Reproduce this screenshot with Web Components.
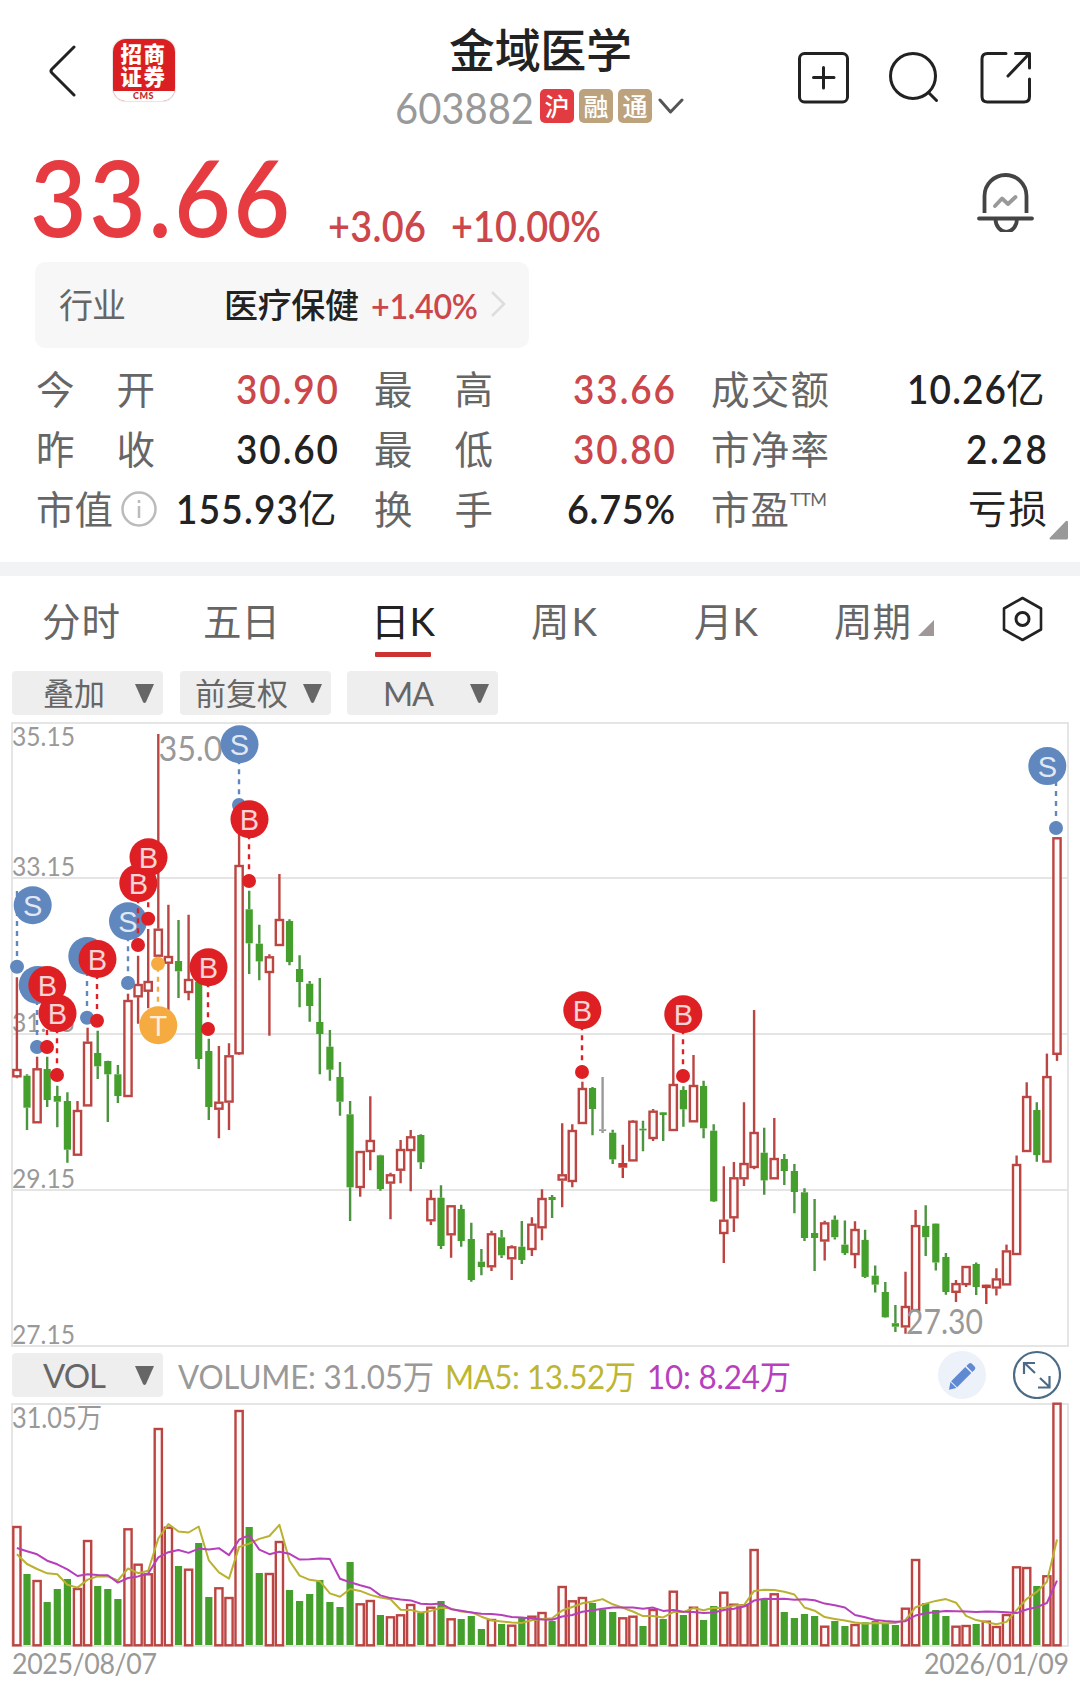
<!DOCTYPE html>
<html lang="zh-CN">
<head>
<meta charset="utf-8">
<title>金域医学 603882</title>
<style>
  html, body { margin: 0; padding: 0; background: #fff; }
  body { width: 1080px; height: 1692px; overflow: hidden; font-family: Lato, "Noto Sans CJK SC", sans-serif; color: #222; }
</style>
</head>
<body>
<stock-page></stock-page>

<script>
const define = (name, html, setup) => {
  const tpl = document.createElement('template');
  tpl.innerHTML = html;
  customElements.define(name, class extends HTMLElement {
    connectedCallback() {
      if (this.shadowRoot) return;
      this.attachShadow({ mode: 'open' }).append(tpl.content.cloneNode(true));
      if (setup) setup(this, this.shadowRoot);
    }
  });
};

/* Text tracked to a fixed width: <q-text w="98" sx=".92">30.90</q-text>; sx condenses the glyphs first. */
define('q-text', `
  <style>
    :host { display: block; flex: none; white-space: nowrap; line-height: 1; }
    span { display: inline-block; transform-origin: 0 50%; }
  </style>
  <span><slot></slot></span>`, (host, root) => {
  const w = +host.getAttribute('w');
  const sx = +(host.getAttribute('sx') || 1);
  if (!w) return;
  const span = root.querySelector('span');
  const n = [...host.textContent.trim()].length;
  const natural = span.getBoundingClientRect().width;
  host.style.width = w + 'px';
  if (n > 1) span.style.letterSpacing = (w / sx - natural) / (n - 1) + 'px';
  if (sx !== 1) span.style.transform = `scaleX(${sx})`;
});

define('market-badge', `
  <style>
    :host { display: flex; width: 34px; height: 34px; border-radius: 5px; background: var(--badge, #bda27e);
      color: #fff; font-size: 25px; font-weight: 500; line-height: 32px; align-items: center; justify-content: center; }
  </style><slot></slot>`);

define('broker-logo', `
  <style>
    :host { display: flex; flex-direction: column; width: 62px; height: 62px; border-radius: 13px; overflow: hidden;
      background: #d91f22; box-shadow: 0 0 1px 1px #e8e4e4; color: #fff; font-weight: 700; text-align: center; }
    b { display: block; font-size: 21.5px; line-height: 23px; letter-spacing: 1.5px; }
    .top { padding-top: 4px; }
    i { font-style: normal; display: block; margin-top: 2px; height: 14px; background: #fff; color: #c02a2a; font-size: 9px; font-weight: 900; line-height: 10px; letter-spacing: .5px; }
  </style>
  <b class="top">招商</b><b>证券</b><i>CMS</i>`);

define('stock-header', `
  <style>
    :host { display: flex; height: 140px; align-items: flex-start; }
    svg { display: block; flex: none; fill: none; stroke: #222; stroke-width: 3; stroke-linecap: round; stroke-linejoin: round; }
    .back { margin: 45px 0 0 49px; }
    broker-logo { margin: 39px 0 0 35.500px; }
    .mid { margin-left: 220.500px; padding-top: 23px; }
    .name { padding-left: 54px; font-size: 46px; font-weight: 500; }
    .name q-text { line-height: 54px; }
    .code { display: flex; margin-top: 12px; height: 34px; align-items: flex-start; }
    .code q-text { font-size: 43px; line-height: 38px; color: #999; margin-right: 6px; }
    market-badge { margin-right: 5px; }
    .red { --badge: #e23b41; }
    .code svg { margin: 9px 0 0 1px; stroke: #555; }
    .tools { margin: 51px 49px 0 auto; display: flex; gap: 40px; }
  </style>
  <svg class="back" width="28" height="52"><path d="M25 2 3 24Q1 26 3 28L25 50"/></svg>
  <broker-logo></broker-logo>
  <div class="mid">
    <div class="name"><q-text w="183">金域医学</q-text></div>
    <div class="code"><q-text w="139" sx=".93">603882</q-text>
      <market-badge class="red">沪</market-badge><market-badge>融</market-badge><market-badge>通</market-badge>
      <svg width="26" height="18"><path d="M2 2 12.500 14 24 2"/></svg></div>
  </div>
  <div class="tools">
    <svg width="51" height="53"><rect x="1.500" y="2.500" width="48" height="48.500" rx="5"/><path d="M25.500 16.500V37M15.500 26.500H36"/></svg>
    <svg width="51" height="53"><circle cx="24" cy="25" r="22.500"/><path d="M40 42 47.500 49.500"/></svg>
    <svg width="51" height="53"><path d="M26 2.500H7.500Q2 2.500 2 8V45.500Q2 51 7.500 51H44Q49.500 51 49.500 45.500V28M35.500 2.500H49.500V17M49 3 28 25"/></svg>
  </div>`);

define('price-row', `
  <style>
    :host { display: flex; align-items: flex-start; height: 122px; color: #e63b41; }
    .big { font-size: 106px; font-weight: 600; margin: 3px 0 0 30px; }
    .small { font-size: 42px; font-weight: 600; margin-top: 65px; color: #cb474b; }
    svg { fill: none; stroke: #444; stroke-width: 3.800; stroke-linecap: round; margin: 32px 45px 0 auto; }
  </style>
  <q-text class="big" sx=".92" w="260">33.66</q-text>
  <q-text class="small" sx=".9" style="margin-left:38px" w="98">+3.06</q-text>
  <q-text class="small" sx=".9" style="margin-left:25px" w="150">+10.00%</q-text>
  <svg width="59" height="60"><path stroke-linecap="butt" d="M8.500 41V24A21 21 0 0 1 50.500 24V41"/><path d="M3 46.500H56M19.500 47A10.500 12.500 0 0 0 41 47"/><path stroke="#999" stroke-linejoin="round" d="M19 34 26 26.500 32 32 39.500 25"/></svg>`);

define('industry-card', `
  <style>
    :host { display: flex; box-sizing: border-box; width: 494px; height: 86px; margin-left: 35px; padding: 0 22px 0 24px;
      align-items: center; background: #f7f7f7; border-radius: 10px; font-size: 34px; }
    .k { color: #666; } .v { margin-left: 98px; font-weight: 500; }
    .p { margin-left: 12px; font-size: 35px; font-weight: 600; color: #cb474b; }
    svg { margin: 0 0 2px auto; fill: none; stroke: #ddd; stroke-width: 2.500; }
  </style>
  <q-text class="k" w="67">行业</q-text><q-text class="v" w="135">医疗保健</q-text><q-text class="p" sx=".92" w="107">+1.40%</q-text>
  <svg width="17" height="26"><path d="M2 1 14 13 2 25"/></svg>`);

/* One label/value pair; the label comes from slot "k", the value is the default slot. */
define('quote-cell', `
  <style>
    :host { display: flex; height: 60px; align-items: center; justify-content: space-between; font-size: 38.500px; color: #222; }
    :host([up]) .v { color: #cb474b; }
    .k { display: flex; align-items: center; color: #666; }
    .v { display: flex; align-items: center; font-size: 41px; font-weight: 600; margin-top: -1px; }
  </style>
  <div class="k"><slot name="k"></slot></div><div class="v"><slot></slot></div>`);

define('quote-grid', `
  <style>
    :host { display: grid; position: relative; grid-template-columns: 302px 301px 336px; column-gap: 36px; padding: 11px 34px 23px 36px; height: 180px; }
    .cn { font-size: 38.500px; font-weight: 400; }
    svg { display: block; }
    .info { margin-left: 8px; }
    .ttm { font-size: 18px; margin: -20px 0 0 1px; }
    .more { position: absolute; left: 1049px; top: 172px; }
  </style>
  <quote-cell up><q-text slot="k" w="119">今开</q-text><q-text sx=".9" w="102">30.90</q-text></quote-cell>
  <quote-cell up><q-text slot="k" w="119">最高</q-text><q-text sx=".9" w="102">33.66</q-text></quote-cell>
  <quote-cell><q-text slot="k" w="118">成交额</q-text><q-text sx=".9" w="99">10.26</q-text><q-text class="cn" w="41">亿</q-text></quote-cell>
  <quote-cell><q-text slot="k" w="119">昨收</q-text><q-text sx=".9" w="102">30.60</q-text></quote-cell>
  <quote-cell up><q-text slot="k" w="119">最低</q-text><q-text sx=".9" w="102">30.80</q-text></quote-cell>
  <quote-cell><q-text slot="k" w="118">市净率</q-text><q-text sx=".9" w="81">2.28</q-text></quote-cell>
  <quote-cell><q-text slot="k" w="77">市值</q-text><svg slot="k" class="info" width="36" height="36" fill="none" stroke="#bbb" stroke-width="2.500"><circle cx="18" cy="18" r="16.500"/><path d="M18 15V27M18 9V12"/></svg><q-text sx=".9" w="122">155.93</q-text><q-text class="cn" w="40">亿</q-text></quote-cell>
  <quote-cell><q-text slot="k" w="119">换手</q-text><q-text sx=".92" w="108">6.75%</q-text></quote-cell>
  <quote-cell><q-text slot="k" w="78">市盈</q-text><q-text slot="k" class="ttm" w="37">TTM</q-text><q-text class="cn" w="79">亏损</q-text></quote-cell>
  <svg class="more" width="19" height="20"><path d="M19 2V18Q19 19.500 17.500 19.500H1Q0 18.500 1 17.500L17 1Q18.500 0 19 2Z" fill="#999"/></svg>`);

define('period-tabs', `
  <style>
    :host { display: flex; box-sizing: border-box; height: 109px; border-top: 14px solid #f2f3f5; padding-top: 15px; font-size: 38.500px; color: #666; align-items: flex-start; }
    q-text { line-height: 60px; }
    .on { color: #222; display: flex; flex-direction: column; }
    .on::after { content: ""; width: 56px; height: 5px; margin: 1px 0 0 4px; background: #c33; border-radius: 1px; }
    svg { display: block; }
  </style>
  <q-text style="margin-left:42px" w="78">分时</q-text>
  <q-text style="margin-left:83px" w="77">五日</q-text>
  <div class="on" style="margin-left:91px"><q-text w="64">日K</q-text></div>
  <q-text style="margin-left:96px" w="66">周K</q-text>
  <q-text style="margin-left:97px" w="64">月K</q-text>
  <q-text style="margin-left:76px" w="77">周期</q-text>
  <svg style="margin:29px 0 0 7px" width="16" height="16"><path d="M16 0V16H0Z" fill="#a09898"/></svg>
  <svg style="margin:5px 0 0 68px" width="41" height="46" fill="none" stroke="#222" stroke-width="2.600" stroke-linejoin="round"><path d="M20.500 2 39 12.500V33.500L20.500 44 2 33.500V12.500Z"/><circle cx="20.500" cy="23" r="6.500" stroke-width="3"/></svg>`);

define('drop-chip', `
  <style>
    :host { display: flex; box-sizing: border-box; flex: none; width: 151px; height: 44px; padding: 0 9px 0 0; align-items: center;
      background: #eee; border-radius: 4px; color: #666; font-size: 31px; }
    svg { display: block; margin-left: auto; }
  </style>
  <slot></slot><svg width="19" height="19"><path d="M0 0H19L11 18Q9.500 20 8 18Z" fill="#666"/></svg>`);

define('chart-toolbar', `
  <style>
    :host { display: flex; height: 51px; padding-left: 12px; gap: 17px; align-items: flex-start; }
    .la { font-size: 32.500px; margin-top: 2px; }
  </style>
  <drop-chip><q-text style="margin-left:31px" w="62">叠加</q-text></drop-chip>
  <drop-chip><q-text style="margin-left:15px" w="93">前复权</q-text></drop-chip>
  <drop-chip style="margin-left:-1px"><q-text class="la" style="margin-left:36px" w="51">MA</q-text></drop-chip>`);

/* Candles as "kind high bodyTop bodyBottom low" rows (r rise, g fall, f thin rise, n unchanged);
   each block has its own vertical origin and scale. */
const BLOCKS = [
  { top: 715, k: 3, rows: `r 787 1062 1087 1090|g 1078 1082 1178 1245|r 1025 1060 1225 1225|g 1025 1062 1155 1176|g 1112 1143 1160 1237|g 1132 1158 1304 1343|r 1158 1185 1322 1322|r 938 980 1174 1174|g 947 1014 1054 1092|g 1037 1038 1078 1221|g 1050 1078 1143 1164|r 836 855 1146 1146|r 722 807 847 926|r 642 798 830 880|r 57 641 725 725|r 569 723 746 885|g 615 738 769 849|r 599 792 834 856|g 800 800 1032 1062|g 971 1008 1176 1215|r 993 1160 1184 1270|r 985 1021 1163 1245|r 355 450 1018 1020|g 527 583 685 777|g 629 686 739 796|r 718 724 774 962|r 477 612 693 693` },
  { top: 850, k: 3, rows: `g 208 213 336 346|g 316 357 396 472|g 393 401 468 515|g 384 516 552 673|g 540 590 659 692|g 636 681 755 797|g 753 793 1012 1113|r 903 903 1014 1040|r 739 870 906 961|g 914 916 1017 1022|r 968 973 1001 1108|r 870 897 962 1000|r 840 859 903 1024|g 853 855 937 957|r 1020 1044 1114 1125|g 1006 1043 1188 1197|r 1065 1066 1156 1223|g 1064 1077 1173 1190|g 1118 1167 1290 1295|g 1197 1235 1251 1276|r 1142 1150 1252 1263|g 1140 1162 1216 1224|r 1186 1189 1228 1290|g 1113 1190 1230 1242|r 1102 1121 1200 1218|r 1018 1044 1135 1171` },
  { top: 980, k: 3, rows: `g 645 651 660 714|r 430 583 602 682|r 433 450 606 622|r 305 324 432 432|g 321 324 387 466|n 291 448 453 459|g 449 458 538 552|f 494 549 563 594|r 420 422 544 544|g 422 446 451 514|r 387 392 477 483|g 396 397 405 483|r 162 312 453 453|g 319 330 388 440|r 225 315 427 427|g 302 318 445 475|g 433 452 664 666|r 559 719 762 849|r 546 592 715 756|r 367 549 598 618|r 90 456 564 568|g 443 518 601 644|r 414 534 598 598|g 522 537 573 615|g 552 573 636 700|g 625 637 774 783|g 657 759 774 873` },
  { top: 740, k: 2.5705, rows: `r 1236 1240 1289 1338|g 1222 1233 1278 1284|g 1235 1297 1319 1324|r 1237 1257 1324 1358|g 1259 1285 1380 1383|g 1351 1377 1400 1420|g 1393 1419 1484 1485|g 1452 1499 1508 1522|r 1367 1455 1510 1526|r 1208 1247 1468 1468|g 1196 1249 1278 1326|g 1242 1243 1343 1364|g 1319 1329 1419 1426|r 1388 1396 1421 1445|r 1352 1352 1401 1406|g 1343 1347 1406 1427|f 1399 1400 1409 1450|r 1358 1384 1410 1428|r 1297 1312 1402 1402|r 1068 1090 1324 1324|r 880 915 1059 1059|g 931 951 1067 1084|r 806 864 1086 1086|r 250 250 809 825` },
];
const CANDLES = BLOCKS.flatMap(b => b.rows.split('|').map(s => {
  const [kind, ...v] = s.split(' ');
  return [kind, ...v.map(y => b.top + y / b.k)];
}));
const X0 = 16.9, STEP = 10.098;
const RED = '#bb4542', GREEN = '#459f2c';
const VOL_TOPS = [558,702,720,786,747,717,744,600,738,747,777,565,671,700,264,560,678,686,609,771,742,771,210,561,699,699,603,750,783,762,720,786,801,666,790,780,825,829,823,792,819,800,783,835,837,828,867,837,852,854,834,827,816,843,738,781,771,789,808,816,832,827,858,807,837,752,825,800,840,798,755,791,793,627,780,760,816,834,822,828,857,843,858,852,847,843,850,855,803,657,789,810,828,857,855,852,842,858,822,679,681,738,706,188];
const f = n => n.toFixed(1);

const box = (kind, x, top, bottom) => {
  if (kind === 'r') return `<rect x="${f(x - 3.6)}" y="${f(top + 1)}" width="7.200" height="${f(Math.max(bottom - top - 2, 1))}" fill="#fffafa" fill-opacity=".9" stroke="${RED}" stroke-width="2.400"/>`;
  const w = kind === 'f' ? 9 : 7.2, c = { f: '#c23b38', g: GREEN, n: '#999' }[kind];
  return `<rect x="${f(x - w / 2)}" y="${f(top)}" width="${w}" height="${f(bottom - top)}" fill="${c}"/>`;
};

/* Trade markers: letter, bubble x/y, dot x/y, optional start of the dashed stem.
   A lower-case kind is a bubble whose letter is covered by its neighbour. */
const MARKS = [
  ['S', 32.7, 905.3, 17, 966.7, 891], ['s', 37.7, 985, 37, 1047], ['B', 47.3, 985, 47, 1047], ['B', 57.5, 1013.3, 57, 1075],
  ['s', 87.3, 956, 87, 1017.7], ['B', 97.5, 959, 97, 1020.7], ['S', 128, 921.3, 128, 983], ['B', 138.3, 883.3, 138, 945],
  ['B', 148.5, 857.3, 148.2, 918.7], ['T', 158.3, 1025.3, 158, 963.7], ['B', 208.5, 967.3, 208, 1029], ['S', 239.5, 744.3, 239, 805],
  ['B', 249.5, 819.3, 249, 881], ['B', 582.3, 1010.3, 582, 1072], ['B', 683.3, 1014.3, 683, 1076], ['S', 1047.3, 766.1, 1056, 828],
];
const MARK_COLOR = { S: '#6088bf', s: '#6088bf', B: '#de2024', T: '#f5ab40' };

const label = (x, y, w, size, text) =>
  `<text x="${x}" y="${y}" textLength="${w}" lengthAdjust="spacingAndGlyphs" font-size="${size}" fill="#999">${text}</text>`;

define('candle-chart', `
  <style>:host { display: block; } svg { display: block; overflow: visible; }</style>`, (host, root) => {
  let s = '<svg width="1080" height="626" viewBox="0 722 1080 626">';
  s += '<g fill="none" stroke="#e5e5e5" stroke-width="2"><rect x="12" y="723" width="1056" height="623"/><path d="M12 878H1068M12 1034H1068M12 1190H1068"/></g>';
  [['35.15', 746], ['33.15', 876], ['31.15', 1032], ['29.15', 1188], ['27.15', 1344]].forEach(([t, y]) => s += label(12, y, 63, 27.5, t));
  CANDLES.forEach(([kind, hi, top, bottom, lo], i) => {
    const x = X0 + i * STEP, c = { r: RED, f: '#c23b38', g: '#4c9440', n: '#999' }[kind];
    s += `<path d="M${f(x)} ${f(hi)}V${f(top)}M${f(x)} ${f(bottom)}V${f(lo)}" stroke="${c}" stroke-width="2.400" fill="none"/>` + box(kind, x, top, bottom);
  });
  s += label(158.5, 761, 64, 34, '35.0') + label(906, 1334, 77, 34, '27.30');
  MARKS.forEach(([t, bx, by, dx, dy, from]) => {
    const c = MARK_COLOR[t], line = t === 'T' ? `M${dx} ${dy}V${by}` : `M${dx} ${from || by}V${dy}`;
    s += `<path d="${line}" stroke="${c}" stroke-width="2.400" stroke-dasharray="5 5" stroke-dashoffset="${t === 'T' ? -3 : from ? 0 : 5}"/>`
      + `<circle cx="${dx}" cy="${dy}" r="7" fill="${c}"/><circle cx="${bx}" cy="${by}" r="19" fill="${c}"/>`;
    if (t !== 's') s += `<text x="${bx}" y="${by + 10.5}" text-anchor="middle" font-family="Liberation Sans, sans-serif" font-size="29" fill="#fff" fill-opacity=".82">${t}</text>`;
  });
  root.innerHTML += s + '</svg>';
});

define('volume-bar', `
  <style>
    :host { display: flex; height: 54px; padding: 5px 0 0 12px; box-sizing: border-box; font-size: 33px; color: #999; }
    q-text { line-height: 46px; }
    drop-chip q-text { margin-left: 31px; }
    svg { display: block; }
  </style>
  <drop-chip style="font-size:33px"><q-text w="63">VOL</q-text></drop-chip>
  <q-text style="margin-left:15px" sx=".95" w="256">VOLUME: 31.05万</q-text>
  <q-text style="margin-left:11px;color:#bcb632" sx=".95" w="191">MA5: 13.52万</q-text>
  <q-text style="margin-left:11px;color:#b83fbe" sx=".95" w="144">10: 8.24万</q-text>
  <svg style="margin:-4px 0 0 auto" width="48" height="50"><circle cx="24" cy="26" r="24" fill="#edf1fa"/><g transform="translate(11 40) rotate(-45)" fill="#5f89d2"><path d="M-.500 .500 6 -4V4.500Z"/><rect x="7" y="-4" width="20" height="8.500"/><path d="M28.500 -4H31.500Q34 -4 34 -2V2.500Q34 4.500 31.500 4.500H28.500Z"/></g></svg>
  <svg style="margin:-4px 19px 0 27px" width="48" height="50" fill="none" stroke="#4b6b87" stroke-width="2.200"><circle cx="24" cy="26" r="23"/><path d="M22 24 12 14.500M22 14H11V25M27 29 36 37.500M36.500 27V38.500H25"/></svg>`);

define('volume-chart', `
  <style>
    :host { display: block; } svg { display: block; overflow: visible; }
    .dates { display: flex; justify-content: space-between; padding: 0 11px 0 12px; font-size: 28.500px; color: #999; }
    q-text { line-height: 30px; }
  </style>`, (host, root) => {
  const h = VOL_TOPS.map(v => 917 - v), y = v => 1340 + (917 - v) / 3;
  const mean = (n, seed) => h.map((_, i) => i < n - 1 ? 917 - seed[i] : h.slice(i - n + 1, i + 1).reduce((a, b) => a + b) / n)
    .map((v, i) => `${f(X0 + i * STEP)},${f(y(v))}`).join(' ');
  let s = '<svg width="1080" height="246" viewBox="0 1402 1080 246"><rect x="12" y="1404" width="1056" height="242" fill="none" stroke="#e5e5e5" stroke-width="2"/>';
  s += label(12, 1428.3, 90, 28, '31.05万');
  h.forEach((v, i) => {
    const kind = CANDLES[i][0], x = X0 + i * STEP;
    s += 'rf'.includes(kind) ? box('r', x, y(v), 1646.3) : box('g', x, y(v), 1645);
  });
  s += `<g fill="none" stroke-width="2" stroke-linejoin="round"><polyline stroke="#b9b230" points="${mean(5, [643, 672, 687, 700])}"/>`
    + `<polyline stroke="#b63fbb" points="${mean(10, [624, 634, 643, 662, 673, 688, 708, 703, 705])}"/></g></svg>`;
  const dates = document.createElement('div');
  dates.className = 'dates';
  dates.innerHTML = '<q-text sx=".94" w="145">2025/08/07</q-text><q-text sx=".94" w="145">2026/01/09</q-text>';
  root.innerHTML += s;
  root.append(dates);
});

define('stock-page', `
  <style>:host { display: flex; flex-direction: column; width: 1080px; height: 1692px; background: #fff; } :host > * { flex: none; }</style>
  <stock-header></stock-header>
  <price-row></price-row>
  <industry-card></industry-card>
  <quote-grid></quote-grid>
  <period-tabs></period-tabs>
  <chart-toolbar></chart-toolbar>
  <candle-chart></candle-chart>
  <volume-bar></volume-bar>
  <volume-chart></volume-chart>`);
</script>
</body>
</html>
